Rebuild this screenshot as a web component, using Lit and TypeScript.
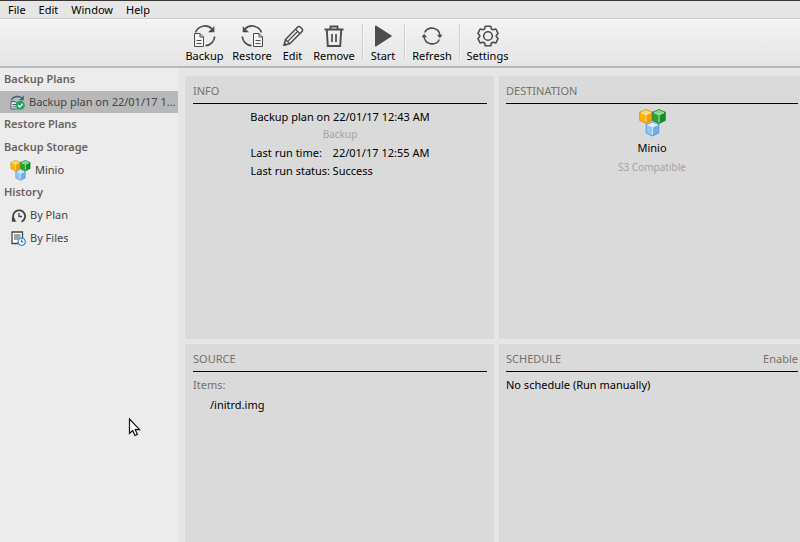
import { LitElement, html, svg, css, nothing } from "lit";
import { customElement, property } from "lit/decorators.js";

const cube = (x: number, y: number, top: string, left: string, right: string, edge: string) => svg`
  <g transform="translate(${x} ${y})" stroke=${edge} stroke-width=".8" stroke-linejoin="round">
    <path d="M7 .5 13.3 3.2 7 6 .7 3.2Z" fill=${top}/>
    <path d="M.7 3.2 7 6V14.5L.7 11.5Z" fill=${left}/>
    <path d="M13.3 3.2 7 6V14.5L13.3 11.5Z" fill=${right}/>
    <path d="M1.8 3.5 7 5.8 12.2 3.5M7 6V13.5" fill="none" stroke="#fff" stroke-opacity=".75" stroke-width="1.1"/>
  </g>`;

const icons: Record<string, unknown> = {
  backup: svg`<g fill="none" stroke="#4d4d4d">
    <path d="M2.5 8.5A10 10 0 0 1 19 5" stroke-width="1.7"/>
    <path d="M21.7 12.5A9.8 9.8 0 0 1 12.5 21.6" stroke-width="1.7"/>
    <path d="M1.5 9.5H7L10.5 13V22.5H1.5Z" fill="#f5f5f5"/><path d="M7 9.5V13H10.5M3.5 16.5H8.5M3.5 19.5H8.5"/></g>
    <path d="M21.3 2.2V8.2H15Z" fill="#4d4d4d"/>`,
  restore: svg`<g fill="none" stroke="#4d4d4d">
    <path d="M5 5A10 10 0 0 1 21.5 8.5" stroke-width="1.7"/>
    <path d="M2.3 12.5A9.8 9.8 0 0 0 11.5 21.6" stroke-width="1.7"/>
    <path d="M13.5 9.5H19L22.5 13V22.5H13.5Z" fill="#f5f5f5"/><path d="M19 9.5V13H22.5M15.5 16.5H20.5M15.5 19.5H20.5"/></g>
    <path d="M2.7 2.2V8.2H9Z" fill="#4d4d4d"/>`,
  edit: svg`<g fill="none" stroke="#4d4d4d" stroke-width="1.5" stroke-linejoin="round">
    <path d="M3 21.3 4.5 15.5 16.5 3.2Q18 1.7 19.5 3.2L21 4.8Q22.3 6.2 20.8 7.7L8.8 19.7Z"/>
    <path d="M14.5 5.2 18.8 9.5M4.5 15.5 8.8 19.7M6.8 17.4 16.5 7.5" stroke-width="1.2"/></g>
    <path d="M2.5 21.8 3.5 18 6.3 20.8Z" fill="#4d4d4d"/>`,
  remove: svg`<g fill="none" stroke="#4d4d4d" stroke-width="1.9">
    <path d="M2.5 5.5H21.5M8.5 5V2.5H15.5V5M4.8 6 5.8 22H18.2L19.2 6"/>
    <path d="M10 10V18M14 10V18" stroke-width="1.7"/></g>`,
  start: svg`<path d="M5 1.5 20.5 11.5Q21 12 20.5 12.5L5 22.5Q4 22.8 4 21.5V2.5Q4 1.2 5 1.5Z" fill="#4d4d4d"/>`,
  refresh: svg`<g fill="none" stroke="#4d4d4d" stroke-width="1.6">
    <path d="M4.6 8.5A8.2 8.2 0 0 1 20 11.5M19.4 15.5A8.2 8.2 0 0 1 4 12.5"/></g>
    <path d="M17 10.8H22.5L19.9 14.2ZM1.5 13.2H7L4.1 9.8Z" fill="#4d4d4d"/>`,
  settings: svg`<g fill="none" stroke="#4d4d4d" stroke-width="1.6" stroke-linejoin="round">
    <circle cx="12" cy="12" r="4.3"/>
    <path d="M9.3 2.2H14.7L15.5 5 17 5.8 19.9 5 22 9.4 20.3 11.4V12.6L22 14.6 19.9 19 17 18.2 15.5 19 14.7 21.8H9.3L8.5 19 7 18.2 4.1 19 2 14.6 3.7 12.6V11.4L2 9.4 4.1 5 7 5.8 8.5 5Z"/></g>`,
  cubes: svg`${cube(0, 0, "#ffdf5a", "#ffb400", "#f59a00", "#d98a00")}
    ${cube(13, 0, "#7fdc7a", "#23a833", "#12912a", "#0b7d22")}
    ${cube(6.5, 12.5, "#d9efff", "#8cc8fa", "#68b0ee", "#4b8fce")}`,
  plan: svg`<g fill="none" stroke="#44606f">
    <path d="M1.2 5A7 6.5 0 0 1 12 3" stroke-width="1.5"/>
    <path d="M1 6.5H5L7.5 8.5V14H1Z" fill="#d8eaf5"/><path d="M2.5 9.5H6M2.5 11.8H6"/></g>
    <path d="M13.8 .5V5.2H9Z" fill="#44606f"/>
    <circle cx="10.3" cy="10.2" r="4.5" fill="#20a65a"/>
    <path d="M8 10.2 9.8 12 12.7 8.8" fill="none" stroke="#fff" stroke-width="1.4"/>`,
  clock: svg`<path d="M3.8 12.5A6 6 0 1 1 10.5 13.8" fill="none" stroke="#454545" stroke-width="1.8"/>
    <path d="M.8 13.8V9L5.8 13.8Z" fill="#454545"/>
    <path d="M8 5V8.5H11" fill="none" stroke="#454545" stroke-width="1.3"/>`,
  files: svg`<path d="M1 1H11.5V12.5H1Z" fill="#fff" stroke="#454545" stroke-width="1.3"/>
    <path d="M3 4H9.5M3 6H9.5M3 8H7.5" stroke="#454545"/>
    <circle cx="10.7" cy="10.7" r="3.6" fill="#fff" stroke="#2d8fc9" stroke-width="1.3"/>
    <path d="M10.7 8.5V11H12.3" fill="none" stroke="#454545"/>`,
  pointer: svg`<path d="M1.5 1V15.5L4.7 12.6 6.9 17.5 9.4 16.4 7.3 11.7H11.5Z" fill="#fff" stroke="#111" stroke-width="1.2"/>`,
};

const boxes: Record<string, string> = {
  cubes: "0 0 27 28", plan: "0 0 15 15", clock: "0 0 15 15", files: "0 0 15 15", pointer: "0 0 13 19",
};

const icon = (name: string, cls = "") =>
  html`<svg class=${cls} viewBox=${boxes[name] ?? "0 0 24 24"} aria-hidden="true">${icons[name]}</svg>`;

const base = css`
  * { box-sizing: border-box; }
  button {
    appearance: none; border: 0; background: none; padding: 0; margin: 0;
    font: inherit; color: inherit; cursor: default;
  }
  h2, h3, p, dl, dd, ul { margin: 0; padding: 0; list-style: none; font: inherit; }
`;

@customElement("detail-panel")
class DetailPanel extends LitElement {
  @property() heading = "";
  @property() action = "";

  static styles = [base, css`
    :host { display: block; min-width: 0; background: #dadada; padding: 8px 7px; }
    header {
      display: flex; justify-content: space-between; height: 20px; line-height: 14px;
      border-bottom: 1px solid #000; color: #77706c;
    }
    header button { height: 14px; line-height: 14px; }
  `];

  render() {
    return html`
      <header><h2>${this.heading}</h2>${this.action ? html`<button>${this.action}</button>` : nothing}</header>
      <slot></slot>`;
  }
}

@customElement("app-root")
class AppRoot extends LitElement {
  static styles = [base, css`
    :host {
      display: flex; flex-direction: column; min-height: 100vh; overflow: hidden;
      box-sizing: border-box; position: relative; background: #e6e6e6; color: #000;
      font: 11px/18px "Noto Sans", "Open Sans", sans-serif;
      border-top: 1px solid #3a3634;
    }
    .menu {
      display: flex; gap: 13px; padding: 0 8px; height: 18px;
      border-bottom: 1px solid #cacaca;
    }
    .menu button { line-height: 17px; }
    .toolbar {
      display: grid; padding: 4px 0 0 181px; height: 49px;
      grid-template-columns: 47px 48px 33px 50px 8px 32px 12px 42px 14px 41px;
      background: linear-gradient(#f3f3f3, #e5e5e5);
      border-top: 1px solid #fafafa; border-bottom: 2px solid #b9b9b9;
    }
    .toolbar button { display: flex; flex-direction: column; align-items: center; line-height: 16px; white-space: nowrap; }
    .toolbar svg { width: 24px; height: 24px; }
    .sep { justify-self: center; width: 2px; height: 36px; border-left: 1px solid #cfcfcf; border-right: 1px solid #f7f7f7; }
    .body { display: flex; flex: 1; }
    aside { width: 178px; flex: none; background: #ececec; color: #444; }
    aside h3 { height: 23px; line-height: 22px; padding-left: 4px; font-weight: 600; color: #69625f; }
    aside ul { display: grid; grid-template-columns: minmax(0, 1fr); gap: 1px; }
    .item {
      display: flex; align-items: center; width: 100%; height: 22px; padding: 0 2px 0 10px;
      gap: 4px; text-align: left;
    }
    .item svg { width: 15px; height: 15px; flex: none; }
    .item .cubes { width: 21px; height: 21px; }
    .history .item { padding-left: 11px; }
    .selected { background: #b8b8b8; }
    .name { overflow: hidden; white-space: nowrap; text-overflow: ellipsis; }
    main {
      flex: 1; min-width: 0; display: grid; gap: 5px; padding: 8px 0 0 7px;
      grid-template-columns: 309fr 301fr; grid-template-rows: minmax(263px, auto) 1fr;
    }
    .main { padding-left: 8px; }
    .edge { padding-right: 2px; }
    .center { display: flex; flex-direction: column; align-items: center; padding-top: 4px; }
    .muted { color: #a3a3a3; font-size: 10px; line-height: 16px; }
    dl { display: grid; grid-template-columns: 82px auto; padding-top: 2px; white-space: nowrap; }
    .logo { width: 27px; height: 28px; }
    .dest { gap: 1px; padding-top: 5px; line-height: 20px; }
    .items { line-height: 20px; padding-top: 3px; }
    .label { color: #77706c; }
    .items li { padding-left: 17px; }
    .pointer { position: absolute; left: 128px; top: 417px; width: 13px; height: 19px; }
  `];

  render() {
    const tool = (id: string, label: string) => html`<button>${icon(id)}${label}</button>`;
    const sep = html`<span class="sep"></span>`;
    const item = (id: string, label: string, selected = false) =>
      html`<li><button class="item ${selected ? "selected" : ""}">${icon(id, id)}<span class="name">${label}</span></button></li>`;

    return html`
      <nav class="menu">${["File", "Edit", "Window", "Help"].map((m) => html`<button>${m}</button>`)}</nav>
      <div class="toolbar" role="toolbar">
        ${tool("backup", "Backup")}${tool("restore", "Restore")}${tool("edit", "Edit")}${tool("remove", "Remove")}
        ${sep}${tool("start", "Start")}${sep}${tool("refresh", "Refresh")}${sep}${tool("settings", "Settings")}
      </div>
      <div class="body">
        <aside>
          <h3>Backup Plans</h3>
          <ul>${item("plan", "Backup plan on 22/01/17 12:43 AM", true)}</ul>
          <h3>Restore Plans</h3>
          <h3>Backup Storage</h3>
          <ul>${item("cubes", "Minio")}</ul>
          <h3>History</h3>
          <ul class="history">${item("clock", "By Plan")}${item("files", "By Files")}</ul>
        </aside>
        <main>
          <detail-panel class="main" heading="INFO">
            <div class="center">
              <p>Backup plan on 22/01/17 12:43 AM</p>
              <p class="muted">Backup</p>
              <dl>
                <dt>Last run time:</dt><dd>22/01/17 12:55 AM</dd>
                <dt>Last run status:</dt><dd>Success</dd>
              </dl>
            </div>
          </detail-panel>
          <detail-panel class="edge" heading="DESTINATION">
            <div class="center dest">
              ${icon("cubes", "logo")}
              <p>Minio</p>
              <p class="muted">S3 Compatible</p>
            </div>
          </detail-panel>
          <detail-panel class="main" heading="SOURCE">
            <div class="items">
              <p class="label">Items:</p>
              <ul><li>/initrd.img</li></ul>
            </div>
          </detail-panel>
          <detail-panel class="edge" heading="SCHEDULE" action="Enable">
            <p class="items">No schedule (Run manually)</p>
          </detail-panel>
        </main>
      </div>
      ${icon("pointer", "pointer")}`;
  }
}
